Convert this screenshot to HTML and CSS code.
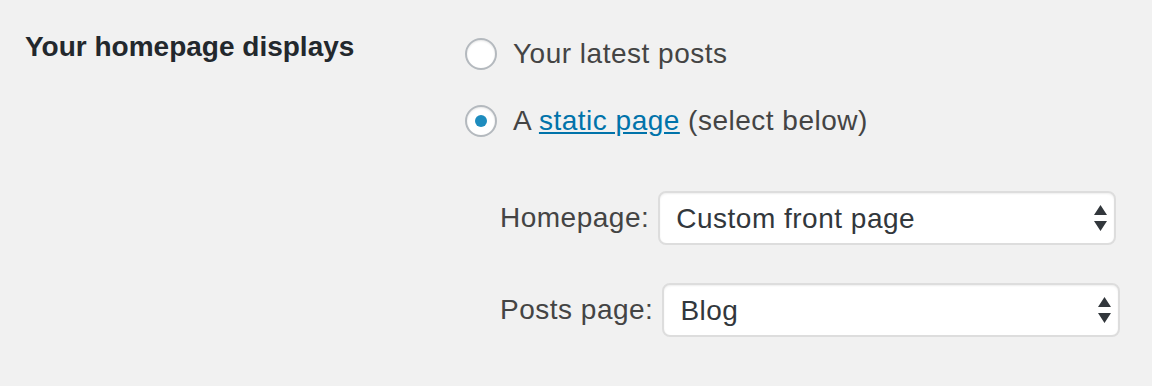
FILE: index.html
```html
<!DOCTYPE html>
<html lang="en">
<head>
  <meta charset="UTF-8">
  <meta name="viewport" content="width=device-width, initial-scale=1.0">
  <title>Reading Settings</title>
  <link rel="stylesheet" href="styles.css">
</head>
<body>
  <div class="form-row">
    <div class="row-label">Your homepage displays</div>
    <div class="row-field">
      <fieldset class="choices">
        <label class="choice">
          <input type="radio" name="show_on_front" value="posts">
          <span>Your latest posts</span>
        </label>
        <label class="choice">
          <input type="radio" name="show_on_front" value="page" checked>
          <span>A <a href="#">static page</a> (select below)</span>
        </label>
      </fieldset>
      <ul class="page-selects">
        <li>
          <label for="page_on_front">Homepage:</label>
          <div class="select-wrap">
            <select id="page_on_front">
              <option>Custom front page</option>
            </select>
            <svg class="arrows" width="13" height="26" viewBox="0 0 13 26"><path d="M6.5 0 L13 10 L0 10 Z M0 16 L13 16 L6.5 26 Z" fill="#32373c"/></svg>
          </div>
        </li>
        <li>
          <label for="page_for_posts">Posts page:</label>
          <div class="select-wrap">
            <select id="page_for_posts">
              <option>Blog</option>
            </select>
            <svg class="arrows" width="13" height="26" viewBox="0 0 13 26"><path d="M6.5 0 L13 10 L0 10 Z M0 16 L13 16 L6.5 26 Z" fill="#32373c"/></svg>
          </div>
        </li>
      </ul>
    </div>
  </div>
</body>
</html>
```

FILE: styles.css
```css
body {
  margin: 0;
  background: #f1f1f1;
  font-family: 'Liberation Sans', Arial, sans-serif;
  color: #444;
}

.form-row {
  display: flex;
  padding: 30px 0 0 25px;
}

.row-label {
  width: 440px;
  font-size: 28px;
  font-weight: bold;
  color: #23282d;
  line-height: 34px;
}

.row-field {
  display: flex;
  flex-direction: column;
}

.choices {
  border: none;
  margin: 0;
  padding: 0;
  display: flex;
  flex-direction: column;
  gap: 35px;
  margin-top: 8px;
}

.choice {
  display: flex;
  align-items: center;
  gap: 16px;
  height: 32px;
  font-size: 28px;
  letter-spacing: 0.5px;
  color: #444;
}

.choice input {
  appearance: none;
  -webkit-appearance: none;
  margin: 0;
  width: 32px;
  height: 32px;
  border: 2px solid #b4b9be;
  border-radius: 50%;
  background: #fff;
  box-shadow: inset 0 1px 2px rgba(0,0,0,0.1);
  display: flex;
  align-items: center;
  justify-content: center;
}

.choice input:checked::before {
  content: '';
  width: 12px;
  height: 12px;
  border-radius: 50%;
  background: #1e8cbe;
}

.choice a {
  color: #0073aa;
}

.page-selects {
  list-style: none;
  margin: 54px 0 0 0;
  padding: 0 0 0 35px;
  display: flex;
  flex-direction: column;
  gap: 38px;
}

.page-selects li {
  display: flex;
  align-items: center;
  gap: 9px;
}

.page-selects label {
  font-size: 28px;
  letter-spacing: 0.5px;
  color: #444;
}

.select-wrap {
  position: relative;
}

.select-wrap select {
  appearance: none;
  -webkit-appearance: none;
  width: 458px;
  height: 54px;
  border: 2px solid #ddd;
  border-radius: 8px;
  background: #fff;
  box-shadow: inset 0 1px 2px rgba(0,0,0,0.07);
  font-family: inherit;
  font-size: 28px;
  letter-spacing: 0.5px;
  color: #32373c;
  padding: 0 40px 0 16px;
  margin: 0;
}

.arrows {
  position: absolute;
  right: 9px;
  top: 14px;
  pointer-events: none;
}
```
